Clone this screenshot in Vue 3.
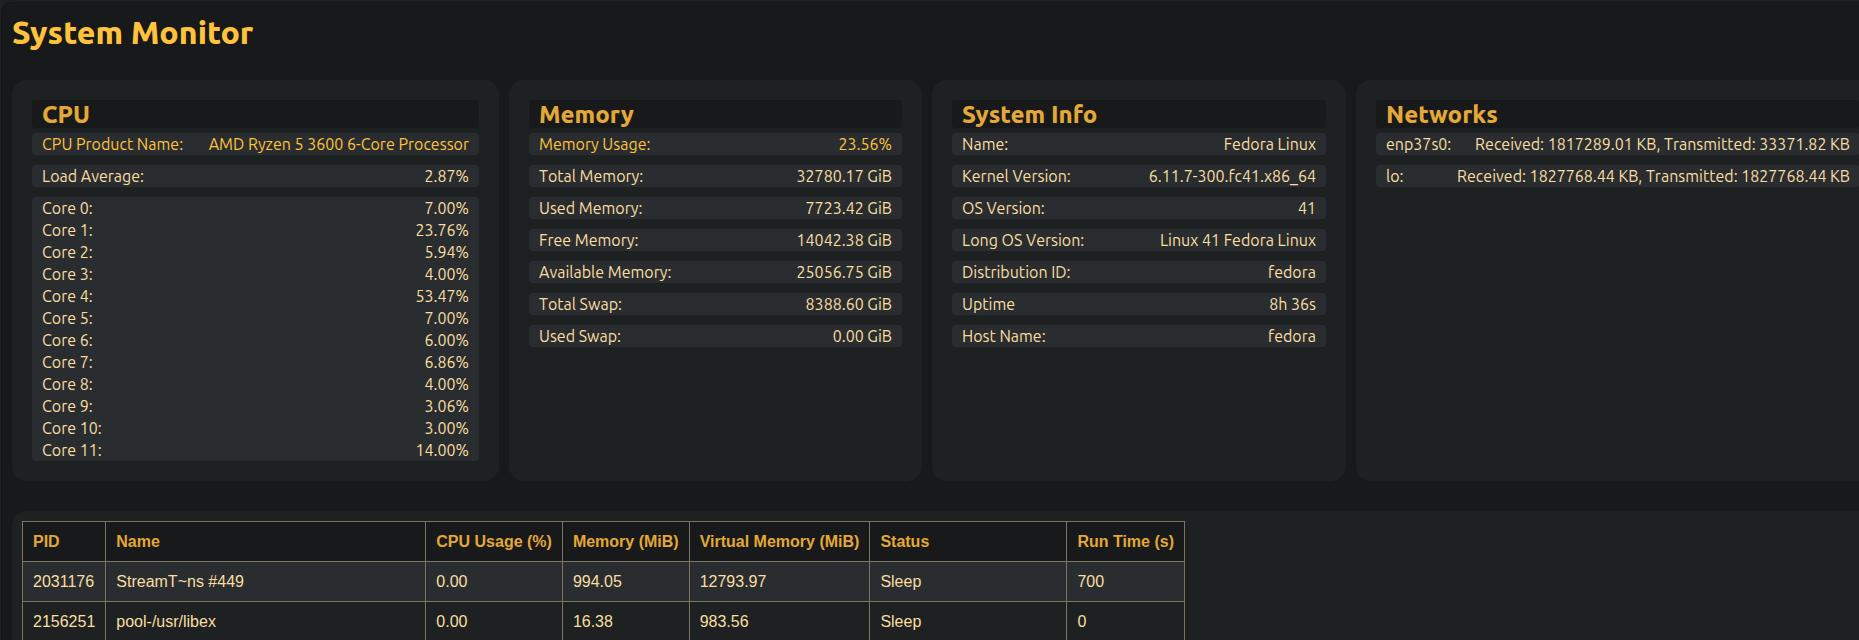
<script setup>
const cores = ['7.00%', '23.76%', '5.94%', '4.00%', '53.47%', '7.00%', '6.00%', '6.86%', '4.00%', '3.06%', '3.00%', '14.00%']

const cards = [
  {
    title: 'CPU',
    groups: [
      { accent: true, rows: [['CPU Product Name:', 'AMD Ryzen 5 3600 6-Core Processor']] },
      { rows: [['Load Average:', '2.87%']] },
      { rows: cores.map((load, i) => [`Core ${i}:`, load]) },
    ],
  },
  {
    title: 'Memory',
    groups: [
      { accent: true, rows: [['Memory Usage:', '23.56%']] },
      { rows: [['Total Memory:', '32780.17 GiB']] },
      { rows: [['Used Memory:', '7723.42 GiB']] },
      { rows: [['Free Memory:', '14042.38 GiB']] },
      { rows: [['Available Memory:', '25056.75 GiB']] },
      { rows: [['Total Swap:', '8388.60 GiB']] },
      { rows: [['Used Swap:', '0.00 GiB']] },
    ],
  },
  {
    title: 'System Info',
    groups: [
      { rows: [['Name:', 'Fedora Linux']] },
      { rows: [['Kernel Version:', '6.11.7-300.fc41.x86_64']] },
      { rows: [['OS Version:', '41']] },
      { rows: [['Long OS Version:', 'Linux 41 Fedora Linux']] },
      { rows: [['Distribution ID:', 'fedora']] },
      { rows: [['Uptime', '8h 36s']] },
      { rows: [['Host Name:', 'fedora']] },
    ],
  },
  {
    title: 'Networks',
    groups: [
      { rows: [['enp37s0:', 'Received: 1817289.01 KB, Transmitted: 33371.82 KB']] },
      { rows: [['lo:', 'Received: 1827768.44 KB, Transmitted: 1827768.44 KB']] },
    ],
  },
]

const columns = ['PID', 'Name', 'CPU Usage (%)', 'Memory (MiB)', 'Virtual Memory (MiB)', 'Status', 'Run Time (s)']
const processes = [
  ['2031176', 'StreamT~ns #449', '0.00', '994.05', '12793.97', 'Sleep', '700'],
  ['2156251', 'pool-/usr/libex', '0.00', '16.38', '983.56', 'Sleep', '0'],
]
</script>

<template>
  <main class="monitor">
    <h1>System Monitor</h1>
    <div class="cards">
      <section v-for="card in cards" :key="card.title" class="card">
        <h2>{{ card.title }}</h2>
        <div class="groups">
          <dl v-for="(group, g) in card.groups" :key="g" class="group" :class="{ accent: group.accent }">
            <div v-for="[label, value] in group.rows" :key="label" class="row">
              <dt>{{ label }}</dt>
              <dd>{{ value }}</dd>
            </div>
          </dl>
        </div>
      </section>
    </div>
    <section class="processes">
      <table>
        <thead>
          <tr>
            <th v-for="column in columns" :key="column" scope="col">{{ column }}</th>
          </tr>
        </thead>
        <tbody>
          <tr v-for="process in processes" :key="process[0]">
            <td v-for="(cell, c) in process" :key="c">{{ cell }}</td>
          </tr>
        </tbody>
      </table>
    </section>
  </main>
</template>

<style>
html {
  background: #1e2122;
}
body {
  margin: 0;
  overflow: hidden;
}
</style>

<style scoped>
.monitor {
  box-sizing: border-box;
  min-height: 100vh;
  margin: 2px 0 0 1px;
  padding: 10px 0 0 10px;
  border: solid #131415;
  border-width: 1px 0 0 1px;
  border-radius: 10px 0 0 0;
  background: #18191a;
  color: #f9dea0;
  font: 16px/22px Ubuntu, "Noto Sans", sans-serif;
}
h1 {
  margin: 0 0 29px;
  color: #ffc23c;
  font-size: 32px;
  font-weight: 800;
  line-height: 38px;
}
.cards {
  display: grid;
  grid-template-columns: 487fr 413fr 414fr 524fr;
  gap: 10px;
  margin-right: -21px;
}
.card {
  padding: 20px;
  border-radius: 15px;
  background: #1e2122;
}
h2 {
  margin: 0 0 5px;
  padding: 2px 10px 0;
  border-radius: 4px;
  background: #18191a;
  color: #e3a837;
  font-size: 24px;
  font-weight: 800;
  line-height: 26px;
}
.groups {
  display: grid;
  gap: 10px;
}
.group {
  margin: 0;
  padding: 0 10px;
  border-radius: 4px;
  background: #2a2d30;
  font-kerning: none;
}
.accent {
  color: #ffc23c;
}
.row {
  display: flex;
  justify-content: space-between;
  white-space: nowrap;
}
dd {
  margin: 0;
}
.processes {
  margin: 30px -21px 0 0;
  padding: 10px;
  border-radius: 15px 15px 0 0;
  background: #1e2122;
}
table {
  border-collapse: collapse;
  font: 16px/19px "Liberation Sans", Arial, sans-serif;
}
th,
td {
  padding: 10px;
  border: 1px solid #7c7362;
  text-align: left;
  white-space: nowrap;
}
th {
  background: #18191a;
  color: #e3a837;
}
th:nth-child(2) {
  width: 299px;
}
th:nth-child(6) {
  width: 176px;
}
tbody tr:nth-child(odd) {
  background: #2a2d30;
}
</style>
